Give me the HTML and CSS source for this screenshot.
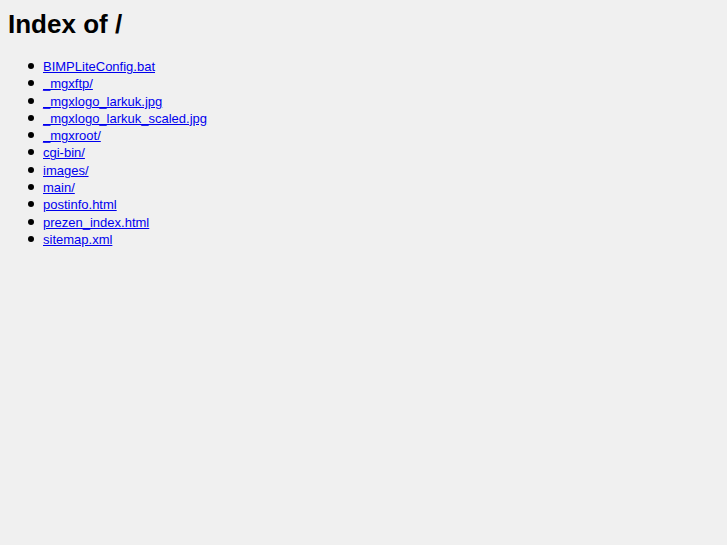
FILE: index.html
```html
<!DOCTYPE html>
<html>
<head>
  <meta charset="UTF-8" />
  <title>Index of /</title>
  <link rel="stylesheet" href="styles.css">
</head>
<body>
  <h1>Index of /</h1>
  <ul>
    <li><a href="BIMPLiteConfig.bat">BIMPLiteConfig.bat</a></li>
    <li><a href="_mgxftp/">_mgxftp/</a></li>
    <li><a href="_mgxlogo_larkuk.jpg">_mgxlogo_larkuk.jpg</a></li>
    <li><a href="_mgxlogo_larkuk_scaled.jpg">_mgxlogo_larkuk_scaled.jpg</a></li>
    <li><a href="_mgxroot/">_mgxroot/</a></li>
    <li><a href="cgi-bin/">cgi-bin/</a></li>
    <li><a href="images/">images/</a></li>
    <li><a href="main/">main/</a></li>
    <li><a href="postinfo.html">postinfo.html</a></li>
    <li><a href="prezen_index.html">prezen_index.html</a></li>
    <li><a href="sitemap.xml">sitemap.xml</a></li>
  </ul>
</body>
</html>
```

FILE: styles.css
```css
body {
  background-color: #f0f0f0;
  font-family: 'Liberation Sans', Arial, sans-serif;
  font-size: 13px;
  line-height: 17.3px;
  color: #000;
}
h1 {
  font-size: 26px;
  line-height: 31px;
  margin: 1px 0 18px;
}
ul {
  margin: 0;
  padding-left: 35px;
  list-style: none;
}
li {
  position: relative;
}
li::before {
  content: '';
  position: absolute;
  left: -15px;
  top: 5px;
  width: 6px;
  height: 6px;
  border-radius: 50%;
  background-color: #000;
}
a {
  color: #0000ee;
}
```
